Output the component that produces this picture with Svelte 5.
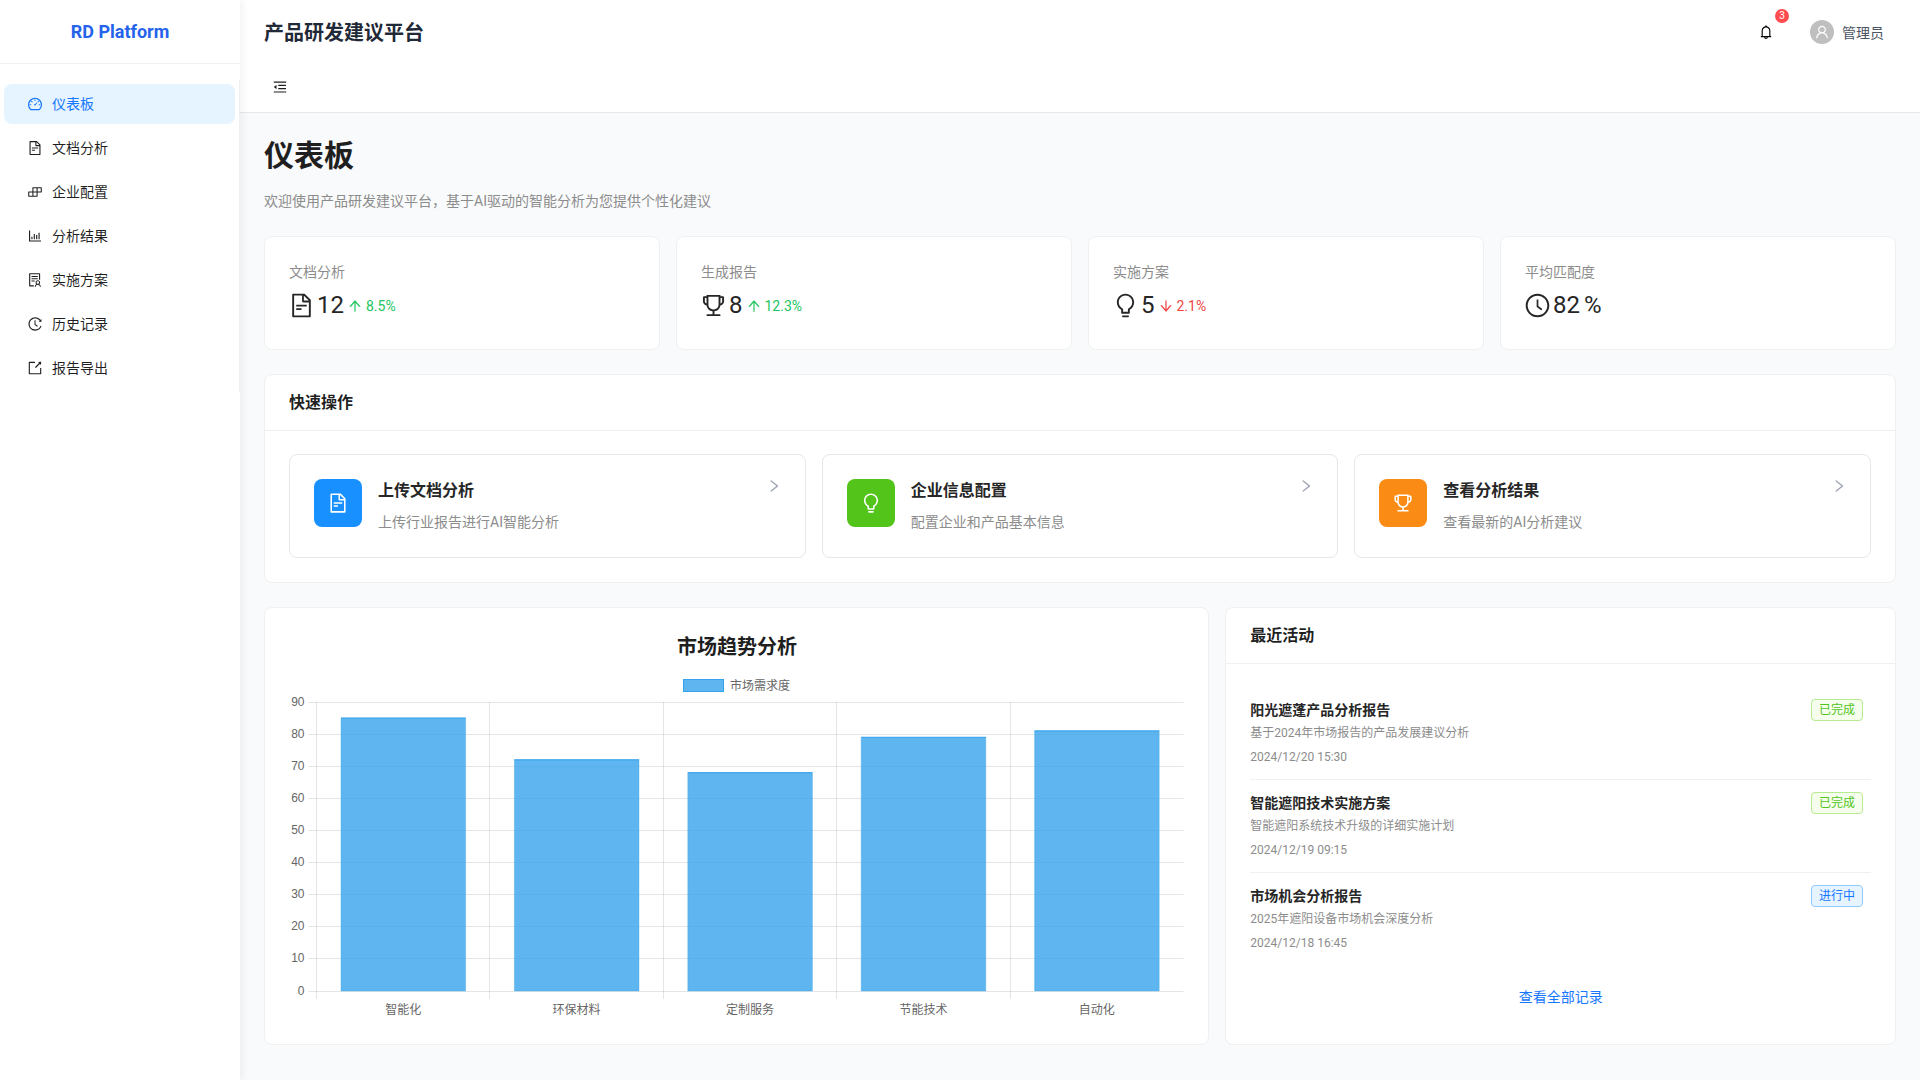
<script>
  const paths = {
    dashboard: 'M924.8 385.6a446.7 446.7 0 00-96-142.4 446.7 446.7 0 00-142.4-96C631.1 123.8 572.5 112 512 112s-119.1 11.8-174.4 35.2a446.7 446.7 0 00-142.4 96 446.7 446.7 0 00-96 142.4C75.8 440.9 64 499.5 64 560c0 132.7 58.3 257.7 159.9 343.1l1.7 1.4c5.8 4.8 13.1 7.5 20.6 7.5h531.7c7.5 0 14.8-2.7 20.6-7.5l1.7-1.4C901.7 817.7 960 692.7 960 560c0-60.5-11.9-119.1-35.2-174.4zM761.4 836H262.6A371.12 371.12 0 01140 560c0-99.4 38.7-192.8 109-263 70.3-70.3 163.7-109 263-109 99.4 0 192.8 38.7 263 109 70.3 70.3 109 163.7 109 263 0 105.6-44.5 205.5-122.6 276zM623.5 421.5a8.03 8.03 0 00-11.3 0L527.7 506c-18.7-5-39.4-.2-54.1 14.5a55.95 55.95 0 000 79.2 55.95 55.95 0 0079.2 0 55.87 55.87 0 0014.5-54.1l84.5-84.5c3.1-3.1 3.1-8.2 0-11.3l-28.3-28.3zM490 320h44c4.4 0 8-3.6 8-8v-80c0-4.4-3.6-8-8-8h-44c-4.4 0-8 3.6-8 8v80c0 4.4 3.6 8 8 8zm260 218v44c0 4.4 3.6 8 8 8h80c4.4 0 8-3.6 8-8v-44c0-4.4-3.6-8-8-8h-80c-4.4 0-8 3.6-8 8zm12.7-197.2l-31.1-31.1a8.03 8.03 0 00-11.3 0l-56.6 56.6a8.03 8.03 0 000 11.3l31.1 31.1c3.1 3.1 8.2 3.1 11.3 0l56.6-56.6c3.1-3.1 3.1-8.2 0-11.3zm-458.6-31.1a8.03 8.03 0 00-11.3 0l-31.1 31.1a8.03 8.03 0 000 11.3l56.6 56.6c3.1 3.1 8.2 3.1 11.3 0l31.1-31.1c3.1-3.1 3.1-8.2 0-11.3l-56.6-56.6zM262 530h-80c-4.4 0-8 3.6-8 8v44c0 4.4 3.6 8 8 8h80c4.4 0 8-3.6 8-8v-44c0-4.4-3.6-8-8-8z',
    file: 'M854.6 288.6L639.4 73.4c-6-6-14.1-9.4-22.6-9.4H192c-17.7 0-32 14.3-32 32v832c0 17.7 14.3 32 32 32h640c17.7 0 32-14.3 32-32V311.3c0-8.5-3.4-16.7-9.4-22.7zM790.2 326H602V137.8L790.2 326zm1.8 562H232V136h302v216a42 42 0 0042 42h216v494zM504 618H320c-4.4 0-8 3.6-8 8v48c0 4.4 3.6 8 8 8h184c4.4 0 8-3.6 8-8v-48c0-4.4-3.6-8-8-8zM312 490v48c0 4.4 3.6 8 8 8h384c4.4 0 8-3.6 8-8v-48c0-4.4-3.6-8-8-8H320c-4.4 0-8 3.6-8 8z',
    build: 'M916 210H376c-17.7 0-32 14.3-32 32v236H108c-17.7 0-32 14.3-32 32v272c0 17.7 14.3 32 32 32h540c17.7 0 32-14.3 32-32V546h236c17.7 0 32-14.3 32-32V242c0-17.7-14.3-32-32-32zm-504 68h200v200H412V278zm-68 468H144V546h200v200zm268 0H412V546h200v200zm268-268H680V278h200v200z',
    bars: 'M888 792H200V168c0-4.4-3.6-8-8-8h-56c-4.4 0-8 3.6-8 8v688c0 4.4 3.6 8 8 8h752c4.4 0 8-3.6 8-8v-56c0-4.4-3.6-8-8-8zm-600-80h56c4.4 0 8-3.6 8-8V560c0-4.4-3.6-8-8-8h-56c-4.4 0-8 3.6-8 8v144c0 4.4 3.6 8 8 8zm152 0h56c4.4 0 8-3.6 8-8V384c0-4.4-3.6-8-8-8h-56c-4.4 0-8 3.6-8 8v320c0 4.4 3.6 8 8 8zm152 0h56c4.4 0 8-3.6 8-8V462c0-4.4-3.6-8-8-8h-56c-4.4 0-8 3.6-8 8v242c0 4.4 3.6 8 8 8zm152 0h56c4.4 0 8-3.6 8-8V304c0-4.4-3.6-8-8-8h-56c-4.4 0-8 3.6-8 8v400c0 4.4 3.6 8 8 8z',
    solution: 'M688 264c0-4.4-3.6-8-8-8H296c-4.4 0-8 3.6-8 8v48c0 4.4 3.6 8 8 8h384c4.4 0 8-3.6 8-8v-48zm-8 136H296c-4.4 0-8 3.6-8 8v48c0 4.4 3.6 8 8 8h384c4.4 0 8-3.6 8-8v-48c0-4.4-3.6-8-8-8zM480 544H296c-4.4 0-8 3.6-8 8v48c0 4.4 3.6 8 8 8h184c4.4 0 8-3.6 8-8v-48c0-4.4-3.6-8-8-8zm-48 308H208V148h560v344c0 4.4 3.6 8 8 8h56c4.4 0 8-3.6 8-8V108c0-17.7-14.3-32-32-32H168c-17.7 0-32 14.3-32 32v784c0 17.7 14.3 32 32 32h264c4.4 0 8-3.6 8-8v-56c0-4.4-3.6-8-8-8zm356.8-74.4c29-26.3 47.2-64.3 47.2-106.6 0-79.5-64.5-144-144-144s-144 64.5-144 144c0 42.3 18.2 80.3 47.2 106.6-57 32.5-96.2 92.7-99.2 162.1-.2 4.5 3.5 8.3 8 8.3h48.1c4.2 0 7.7-3.3 8-7.6C564 871.2 621.7 816 692 816s128 55.2 131.9 124.4c.2 4.2 3.7 7.6 8 7.6H880c4.6 0 8.2-3.8 8-8.3-2.9-69.5-42.2-129.6-99.2-162.1zM692 591c44.2 0 80 35.8 80 80s-35.8 80-80 80-80-35.8-80-80 35.8-80 80-80z',
    history: 'M536.1 273H488c-4.4 0-8 3.6-8 8v275.3c0 2.6 1.2 5 3.3 6.5l165.3 120.7c3.6 2.6 8.6 1.9 11.2-1.7l28.6-39c2.7-3.7 1.9-8.7-1.7-11.2L544.1 528.5V281c0-4.4-3.6-8-8-8zm219.8 75.2l156.8 38.3c5 1.2 9.9-2.6 9.9-7.7l.8-161.5c0-6.7-7.7-10.5-12.9-6.3L752.9 334.1a8 8 0 003 14.1zm167.7 301.1l-56.7-19.5a8 8 0 00-10.1 4.8c-1.9 5.1-3.9 10.1-6 15.1-17.8 42.1-43.3 80-75.9 112.5a353 353 0 01-112.5 75.9 352.18 352.18 0 01-137.7 27.8c-47.8 0-94.1-9.3-137.7-27.8a353 353 0 01-112.5-75.9c-32.5-32.5-58-70.4-75.9-112.5A353.44 353.44 0 01171 512c0-47.8 9.3-94.2 27.8-137.8 17.8-42.1 43.3-80 75.9-112.5a353 353 0 01112.5-75.9C430.6 167.3 477 158 524.8 158s94.1 9.3 137.7 27.8A353 353 0 01775 261.7c10.2 10.3 19.8 21 28.6 32.3l59.8-46.8C784.7 146.6 662.2 81.9 524.6 82 285 82.1 92.6 276.7 95 516.4 97.4 751.9 288.9 942 524.8 942c185.5 0 343.5-117.6 403.7-282.3 1.5-4.2-.7-8.9-4.9-10.4z',
    export: 'M880 912H144c-17.7 0-32-14.3-32-32V144c0-17.7 14.3-32 32-32h360c4.4 0 8 3.6 8 8v56c0 4.4-3.6 8-8 8H184v656h656V520c0-4.4 3.6-8 8-8h56c4.4 0 8 3.6 8 8v360c0 17.7-14.3 32-32 32zM770.87 199.13l-52.2-52.2a8.01 8.01 0 014.7-13.6l179.4-21c5.1-.6 9.5 3.7 8.9 8.9l-21 179.4c-.8 6.6-8.9 9.4-13.6 4.7l-52.4-52.4-256.2 256.2a8.03 8.03 0 01-11.3 0l-42.4-42.4a8.03 8.03 0 010-11.3l256.1-256.3z',
    trophy: 'M868 160h-92v-40c0-4.4-3.6-8-8-8H256c-4.4 0-8 3.6-8 8v40h-92a44 44 0 00-44 44v148c0 81.7 60 149.6 138.2 162C265.7 630.2 359 721.7 476 734.5v105.2H280c-17.7 0-32 14.3-32 32V904c0 4.4 3.6 8 8 8h512c4.4 0 8-3.6 8-8v-32.3c0-17.7-14.3-32-32-32H548V734.5C665 721.7 758.3 630.2 773.8 514 852 501.6 912 433.7 912 352V204a44 44 0 00-44-44zM184 352V232h64v207.6a91.99 91.99 0 01-64-87.6zm520 128c0 49.1-19.1 95.4-53.9 130.1-34.8 34.8-81 53.9-130.1 53.9h-16c-49.1 0-95.4-19.1-130.1-53.9-34.8-34.8-53.9-81-53.9-130.1V184h384v296zm136-128c0 41-26.9 75.8-64 87.6V232h64v120z',
    bulb: 'M632 888H392c-4.4 0-8 3.6-8 8v32c0 17.7 14.3 32 32 32h192c17.7 0 32-14.3 32-32v-32c0-4.4-3.6-8-8-8zM512 64c-181.1 0-328 146.9-328 328 0 121.4 66 227.4 164 284.1V792c0 17.7 14.3 32 32 32h264c17.7 0 32-14.3 32-32V676.1c98-56.7 164-162.7 164-284.1 0-181.1-146.9-328-328-328zm127.9 549.8L604 634.6V752H420V634.6l-35.9-20.8C305.4 568.3 256 484.5 256 392c0-141.4 114.6-256 256-256s256 114.6 256 256c0 92.5-49.4 176.3-128.1 221.8z',
    clock: 'M512 64C264.6 64 64 264.6 64 512s200.6 448 448 448 448-200.6 448-448S759.4 64 512 64zm0 820c-205.4 0-372-166.6-372-372s166.6-372 372-372 372 166.6 372 372-166.6 372-372 372zM686.7 638.6L544.1 535.5V288c0-4.4-3.6-8-8-8H488c-4.4 0-8 3.6-8 8v275.4c0 2.6 1.2 5 3.3 6.5l165.4 120.6c3.6 2.6 8.6 1.8 11.2-1.7l28.6-39c2.6-3.7 1.8-8.7-1.8-11.2z',
    up: 'M868 545.5L536.1 163a31.96 31.96 0 00-48.3 0L156 545.5a7.97 7.97 0 006 13.2h81c4.6 0 9-2 12.1-5.5L474 300.9V864c0 4.4 3.6 8 8 8h60c4.4 0 8-3.6 8-8V300.9l218.9 252.3c3 3.5 7.4 5.5 12.1 5.5h81c6.8 0 10.5-8 6-13.2z',
    down: 'M862 465.3h-81c-4.6 0-9 2-12.1 5.5L550 723.1V160c0-4.4-3.6-8-8-8h-60c-4.4 0-8 3.6-8 8v563.1L255.1 470.8c-3-3.5-7.4-5.5-12.1-5.5h-81c-6.8 0-10.5 8.1-6 13.2L487.9 861a31.96 31.96 0 0048.3 0L868 478.5c4.5-5.2.8-13.2-6-13.2z',
    right: 'M765.7 486.8L314.9 134.7A7.97 7.97 0 00302 141v77.3c0 4.9 2.3 9.6 6.1 12.6l360 281.1-360 281.1c-3.9 3-6.1 7.7-6.1 12.6V883c0 6.7 7.7 10.4 12.9 6.3l450.8-352.1a31.96 31.96 0 000-50.4z',
    bell: 'M816 768h-24V428c0-141.1-104.3-257.7-240-277.1V112c0-22.1-17.9-40-40-40s-40 17.9-40 40v38.9c-135.7 19.4-240 136-240 277.1v340h-24c-17.7 0-32 14.3-32 32v32c0 4.4 3.6 8 8 8h216c0 61.8 50.2 112 112 112s112-50.2 112-112h216c4.4 0 8-3.6 8-8v-32c0-17.7-14.3-32-32-32zM512 888c-26.5 0-48-21.5-48-48h96c0 26.5-21.5 48-48 48zM304 768V428c0-55.6 21.6-107.8 60.9-147.1S456.4 220 512 220c55.6 0 107.8 21.6 147.1 60.9S720 372.4 720 428v340H304z',
    user: 'M858.5 763.6a374 374 0 00-80.6-119.5 375.63 375.63 0 00-119.5-80.6c-.4-.2-.8-.3-1.2-.5C719.5 518 760 444.7 760 362c0-137-111-248-248-248S264 225 264 362c0 82.7 40.5 156 102.8 201.1-.4.2-.8.3-1.2.5-44.8 18.9-85 46-119.5 80.6a375.63 375.63 0 00-80.6 119.5A371.7 371.7 0 00136 901.8a8 8 0 008 8.2h60c4.4 0 8-3.6 8-7.8 2-77.2 33-149.5 87.8-204.3 56.7-56.7 132-87.9 212.2-87.9s155.5 31.2 212.2 87.9C779 752.7 810 825 812 902.2c.1 4.4 3.6 7.8 8 7.8h60a8 8 0 008-8.2c-1-47.8-10.9-94.3-29.5-138.2zM512 534c-45.9 0-89.1-17.9-121.6-50.4S340 407.9 340 362c0-45.9 17.9-89.1 50.4-121.6S466.1 190 512 190s89.1 17.9 121.6 50.4S684 316.1 684 362c0 45.9-17.9 89.1-50.4 121.6S557.9 534 512 534z',
    outdent: 'M408 442h480c4.4 0 8-3.6 8-8v-56c0-4.4-3.6-8-8-8H408c-4.4 0-8 3.6-8 8v56c0 4.4 3.6 8 8 8zm-8 204c0 4.4 3.6 8 8 8h480c4.4 0 8-3.6 8-8v-56c0-4.4-3.6-8-8-8H408c-4.4 0-8 3.6-8 8v56zm504-486H120c-4.4 0-8 3.6-8 8v56c0 4.4 3.6 8 8 8h784c4.4 0 8-3.6 8-8v-56c0-4.4-3.6-8-8-8zm0 632H120c-4.4 0-8 3.6-8 8v56c0 4.4 3.6 8 8 8h784c4.4 0 8-3.6 8-8v-56c0-4.4-3.6-8-8-8zM115.4 518.9L271.7 642c5.8 4.6 14.4.5 14.4-6.9V388.9c0-7.4-8.5-11.5-14.4-6.9L115.4 505.1a8.74 8.74 0 000 13.8z'
  }

  const menu = [
    { icon: 'dashboard', label: '仪表板', active: true },
    { icon: 'file', label: '文档分析' },
    { icon: 'build', label: '企业配置' },
    { icon: 'bars', label: '分析结果' },
    { icon: 'solution', label: '实施方案' },
    { icon: 'history', label: '历史记录' },
    { icon: 'export', label: '报告导出' }
  ]

  const stats = [
    { title: '文档分析', icon: 'file', value: '12', trend: 'up', delta: '8.5%' },
    { title: '生成报告', icon: 'trophy', value: '8', trend: 'up', delta: '12.3%' },
    { title: '实施方案', icon: 'bulb', value: '5', trend: 'down', delta: '2.1%' },
    { title: '平均匹配度', icon: 'clock', value: '82', suffix: '%' }
  ]

  const actions = [
    { icon: 'file', color: '#1890ff', title: '上传文档分析', desc: '上传行业报告进行AI智能分析' },
    { icon: 'bulb', color: '#52c41a', title: '企业信息配置', desc: '配置企业和产品基本信息' },
    { icon: 'trophy', color: '#fa8c16', title: '查看分析结果', desc: '查看最新的AI分析建议' }
  ]

  const activities = [
    { title: '阳光遮蓬产品分析报告', desc: '基于2024年市场报告的产品发展建议分析', time: '2024/12/20 15:30', status: '已完成', done: true },
    { title: '智能遮阳技术实施方案', desc: '智能遮阳系统技术升级的详细实施计划', time: '2024/12/19 09:15', status: '已完成', done: true },
    { title: '市场机会分析报告', desc: '2025年遮阳设备市场机会深度分析', time: '2024/12/18 16:45', status: '进行中', done: false }
  ]

  // chart geometry, in the svg's own coordinates (origin at 289,632 on the page)
  const left = 27.5
  const band = 173.4
  const top = 70
  const bottom = 359
  const unit = (bottom - top) / 90
  const crisp = v => Math.floor(v) + 0.5
  const bars = [
    { label: '智能化', value: 85 },
    { label: '环保材料', value: 72 },
    { label: '定制服务', value: 68 },
    { label: '节能技术', value: 79 },
    { label: '自动化', value: 81 }
  ]
  const ticks = [0, 10, 20, 30, 40, 50, 60, 70, 80, 90]
</script>

{#snippet icon(name, size = 14)}
  <svg class="icon" viewBox="0 0 1024 1024" width={size} height={size} fill="currentColor"><path d={paths[name]} /></svg>
{/snippet}

<div class="layout">
  <aside class="sider">
    <div class="logo">RD Platform</div>
    <ul class="menu">
      {#each menu as item}
        <li class="menu-item" class:active={item.active}>
          {@render icon(item.icon, 16)}
          <span>{item.label}</span>
        </li>
      {/each}
    </ul>
  </aside>

  <div class="main">
    <header class="header">
      <div class="topbar">
        <div class="app-title">产品研发建议平台</div>
        <div class="top-right">
          <div class="bell">
            {@render icon('bell', 16)}
            <span class="badge">3</span>
          </div>
          <div class="account">
            <span class="avatar">{@render icon('user', 16)}</span>
            <span>管理员</span>
          </div>
        </div>
      </div>
      <div class="collapse">
        <span class="collapse-btn">{@render icon('outdent', 16)}</span>
      </div>
    </header>

    <main class="content">
      <h1>仪表板</h1>
      <p class="intro">欢迎使用产品研发建议平台，基于AI驱动的智能分析为您提供个性化建议</p>

      <section class="stats">
        {#each stats as s}
          <div class="card stat">
            <div class="stat-title">{s.title}</div>
            <div class="stat-value">
              <span class="stat-icon">{@render icon(s.icon, 27)}</span>
              <span class="num">{s.value}</span>
              {#if s.suffix}<span class="num suffix">{s.suffix}</span>{/if}
              {#if s.trend}
                <span class="delta {s.trend}">{@render icon(s.trend, 16)}<span>{s.delta}</span></span>
              {/if}
            </div>
          </div>
        {/each}
      </section>

      <section class="card quick">
        <div class="card-head">快速操作</div>
        <div class="quick-body">
          {#each actions as a}
            <div class="action">
              <span class="action-icon" style="background: {a.color}">{@render icon(a.icon, 22)}</span>
              <div class="action-text">
                <div class="action-title">{a.title}</div>
                <div class="action-desc">{a.desc}</div>
              </div>
              <span class="chevron">{@render icon('right', 16)}</span>
            </div>
          {/each}
        </div>
      </section>

      <section class="bottom">
        <div class="card chart-card">
          <svg class="chart" viewBox="0 0 895 387" width="895" height="387">
            <text x="448" y="22" class="chart-title" text-anchor="middle">市场趋势分析</text>
            <rect x="394.5" y="47.5" width="40" height="12" fill="rgba(54,162,235,0.8)" stroke="rgb(54,162,235)" />
            <text x="441" y="58" class="chart-text" fill="#666">市场需求度</text>

            {#each ticks as t}
              <line x1={left - 8} x2={left + band * 5} y1={crisp(bottom - t * unit)} y2={crisp(bottom - t * unit)} stroke="rgba(0,0,0,0.1)" />
              <text x={left - 12} y={bottom - t * unit + 3.5} class="chart-text" fill="#666" text-anchor="end">{t}</text>
            {/each}
            {#each [0, 1, 2, 3, 4] as i}
              <line x1={crisp(left + band * i)} x2={crisp(left + band * i)} y1={top} y2={bottom + 8} stroke="rgba(0,0,0,0.1)" />
            {/each}

            {#each bars as b, i}
              <rect
                x={left + band * i + 24.5}
                y={bottom - b.value * unit}
                width="124.6"
                height={b.value * unit}
                fill="rgba(54,162,235,0.8)"
                stroke="rgba(54,162,235,0.35)"
                stroke-width="1"
              />
              <line
                x1={left + band * i + 24.5}
                x2={left + band * i + 149.1}
                y1={bottom - b.value * unit}
                y2={bottom - b.value * unit}
                stroke="rgb(54,162,235)"
              />
              <text x={left + band * i + band / 2} y="382" class="chart-text" fill="#666" text-anchor="middle">{b.label}</text>
            {/each}
          </svg>
        </div>

        <div class="card activity">
          <div class="card-head">最近活动</div>
          <div class="activity-body">
            {#each activities as a}
              <div class="activity-item">
                <div class="activity-main">
                  <div class="activity-title">{a.title}</div>
                  <div class="activity-desc">{a.desc}</div>
                  <div class="activity-time">{a.time}</div>
                </div>
                <span class="tag" class:done={a.done}>{a.status}</span>
              </div>
            {/each}
            <div class="all-link">查看全部记录</div>
          </div>
        </div>
      </section>
    </main>
  </div>
</div>

<style>
  :global(body) {
    margin: 0;
    background: #f9fafb;
    font-family: Roboto, "Noto Sans CJK SC", sans-serif;
    font-size: 14px;
    color: rgba(0, 0, 0, 0.88);
  }

  .layout {
    display: flex;
    min-height: 1080px;
  }

  .icon {
    display: block;
    flex: none;
  }

  /* sidebar */
  .sider {
    position: relative;
    z-index: 2;
    width: 240px;
    flex: none;
    background: #fff;
    box-shadow: 2px 0 8px rgba(0, 0, 0, 0.06);
  }

  .logo {
    height: 63px;
    line-height: 63px;
    border-bottom: 1px solid #f0f0f0;
    text-align: center;
    font-size: 18px;
    font-weight: 700;
    color: #2563eb;
  }

  .menu {
    display: flex;
    flex-direction: column;
    gap: 4px;
    list-style: none;
    margin: 16px 0 0;
    padding: 4px;
    border-right: 1px solid #f0f0f0;
  }

  .menu-item {
    display: flex;
    align-items: center;
    gap: 9px;
    height: 40px;
    padding-left: 23px;
    border-radius: 8px;
    line-height: 40px;
  }

  .menu-item.active {
    background: #e6f4ff;
    color: #1677ff;
  }

  /* header */
  .main {
    flex: 1;
    min-width: 0;
  }

  .header {
    background: #fff;
    border-bottom: 1px solid #e5e7eb;
  }

  .topbar {
    display: flex;
    align-items: center;
    justify-content: space-between;
    height: 64px;
    padding: 0 36px 0 24px;
  }

  .app-title {
    margin-bottom: 2px;
    font-size: 20px;
    font-weight: 600;
    color: #1f2937;
  }

  .top-right {
    display: flex;
    align-items: center;
    gap: 36px;
  }

  .bell {
    position: relative;
    color: #000;
  }

  .badge {
    position: absolute;
    top: -15px;
    left: 17px;
    width: 14px;
    height: 14px;
    border-radius: 50%;
    background: #ff4d4f;
    color: #fff;
    font-size: 10px;
    line-height: 14px;
    text-align: center;
  }

  .account {
    display: flex;
    align-items: center;
    gap: 8px;
    color: #4b5563;
  }

  .avatar {
    display: flex;
    align-items: center;
    justify-content: center;
    width: 24px;
    height: 24px;
    border-radius: 50%;
    background: #bfbfbf;
    color: #fff;
  }

  .collapse {
    height: 48px;
    padding: 0 24px;
  }

  .collapse-btn {
    display: flex;
    align-items: center;
    justify-content: center;
    width: 32px;
    height: 46px;
    color: rgba(0, 0, 0, 0.88);
  }

  /* content */
  .content {
    padding: 24px;
  }

  h1 {
    margin: 0;
    font-size: 30px;
    font-weight: 600;
    line-height: 38px;
    color: #1f1f1f;
  }

  .intro {
    margin: 15px 0 24px;
    line-height: 22px;
    color: #8c8c8c;
  }

  .card {
    background: #fff;
    border: 1px solid #f0f0f0;
    border-radius: 8px;
  }

  .card-head {
    height: 55px;
    line-height: 55px;
    padding: 0 24px;
    border-bottom: 1px solid #f0f0f0;
    font-size: 16px;
    font-weight: 600;
  }

  .stats {
    display: grid;
    grid-template-columns: repeat(4, 1fr);
    gap: 16px;
    margin-bottom: 24px;
  }

  .stat {
    padding: 24px;
  }

  .stat-title {
    margin-bottom: 4px;
    line-height: 22px;
    color: #8c8c8c;
  }

  .stat-value {
    display: flex;
    align-items: center;
    height: 38px;
    margin: -1px 0 1px;
  }

  .stat-icon {
    margin: 0 2px 0 -1px;
    color: #262626;
  }

  .num {
    font-size: 24px;
    color: #262626;
  }

  .suffix {
    margin-left: 4px;
  }

  .delta {
    display: flex;
    align-items: center;
    gap: 3px;
    margin-left: 3px;
    padding-top: 1px;
  }

  .delta.up {
    color: #22c55e;
  }

  .delta.down {
    color: #ef4444;
  }

  .quick {
    margin-bottom: 24px;
  }

  .quick-body {
    display: grid;
    grid-template-columns: repeat(3, 1fr);
    gap: 16px;
    padding: 23px 24px 24px;
  }

  .action {
    display: flex;
    gap: 16px;
    padding: 24px;
    border: 1px solid #e5e7eb;
    border-radius: 8px;
  }

  .action-icon {
    display: flex;
    align-items: center;
    justify-content: center;
    flex: none;
    width: 48px;
    height: 48px;
    border-radius: 8px;
    color: #fff;
  }

  .action-text {
    flex: 1;
    min-width: 0;
  }

  .action-title {
    margin-bottom: 8px;
    font-size: 16px;
    font-weight: 600;
    line-height: 24px;
    color: #262626;
  }

  .action-desc {
    line-height: 22px;
    color: #8c8c8c;
  }

  .chevron {
    flex: none;
    height: 16px;
    margin: -1px -1px 0 0;
    color: #9ca3af;
  }

  .bottom {
    display: grid;
    grid-template-columns: 945.33fr 670.67fr;
    gap: 16px;
  }

  .chart-card {
    padding: 24px 24px 25px;
  }

  .chart {
    display: block;
    font-family: "Liberation Sans", "Noto Sans CJK SC", sans-serif;
  }

  .chart-title {
    font-size: 20px;
    font-weight: 700;
    fill: #1f1f1f;
  }

  .chart-text {
    font-size: 12px;
  }

  .activity-body {
    padding: 23px 24px 24px;
  }

  .activity-item {
    display: flex;
    justify-content: space-between;
    align-items: flex-start;
    padding: 12px 8px 12px 0;
    border-bottom: 1px solid #f0f0f0;
  }

  .activity-item:nth-child(3) {
    border-bottom: 0;
  }

  .activity-title {
    margin-bottom: 2px;
    font-weight: 600;
    line-height: 22px;
    color: #262626;
  }

  .activity-desc,
  .activity-time {
    font-size: 12px;
    line-height: 20px;
    color: #8c8c8c;
  }

  .activity-time {
    margin-top: 4px;
  }

  .tag {
    padding: 0 7px;
    border: 1px solid #91caff;
    border-radius: 4px;
    background: #e6f4ff;
    color: #1677ff;
    font-size: 12px;
    line-height: 20px;
  }

  .tag.done {
    border-color: #b7eb8f;
    background: #f6ffed;
    color: #52c41a;
  }

  .all-link {
    margin-top: 16px;
    line-height: 32px;
    text-align: center;
    color: #1677ff;
  }
</style>
